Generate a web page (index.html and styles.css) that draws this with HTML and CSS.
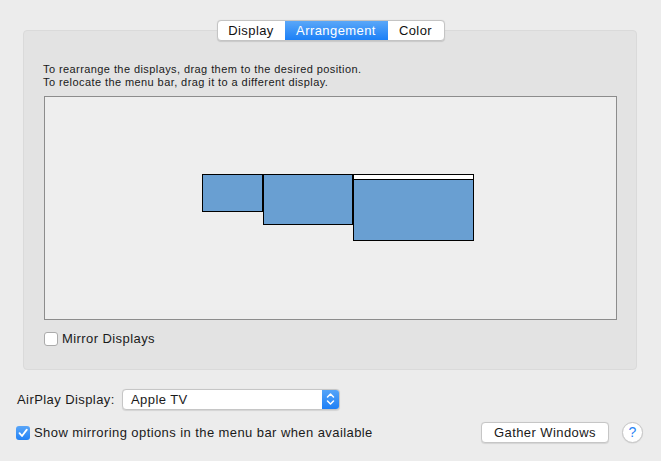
FILE: index.html
```html
<!DOCTYPE html>
<html>
<head>
<meta charset="utf-8">
<link rel="stylesheet" href="styles.css">
</head>
<body>
<div class="tabs-row">
  <div class="tabs">
    <div class="tab tab-display">Display</div>
    <div class="tab tab-active">Arrangement</div>
    <div class="tab tab-color">Color</div>
  </div>
</div>
<div class="group">
  <div class="hint">
    <div>To rearrange the displays, drag them to the desired position.</div>
    <div>To relocate the menu bar, drag it to a different display.</div>
  </div>
  <div class="canvas">
    <div class="screen screen-1"></div>
    <div class="screen screen-2"></div>
    <div class="screen screen-3"><div class="menubar"></div></div>
  </div>
  <label class="check-row mirror">
    <span class="checkbox"></span>
    <span class="check-label">Mirror Displays</span>
  </label>
</div>
<div class="airplay-row">
  <span class="airplay-label">AirPlay Display:</span>
  <div class="popup">
    <span class="popup-text">Apple TV</span>
    <span class="stepper">
      <svg width="17" height="20" viewBox="0 0 17 20">
        <path d="M5.5 8 L8.5 5 L11.5 8" fill="none" stroke="#fff" stroke-width="1.5" stroke-linecap="round" stroke-linejoin="round"/>
        <path d="M5.5 12 L8.5 15 L11.5 12" fill="none" stroke="#fff" stroke-width="1.5" stroke-linecap="round" stroke-linejoin="round"/>
      </svg>
    </span>
  </div>
</div>
<div class="bottom-row">
  <label class="check-row show-opt">
    <span class="checkbox checked">
      <svg width="14" height="14" viewBox="0 0 14 14">
        <path d="M3.5 7.2 L6 10 L10.8 3.6" fill="none" stroke="#fff" stroke-width="1.8" stroke-linecap="round" stroke-linejoin="round"/>
      </svg>
    </span>
    <span class="check-label">Show mirroring options in the menu bar when available</span>
  </label>
  <div class="bottom-right">
    <div class="button">Gather Windows</div>
    <div class="help">?</div>
  </div>
</div>
</body>
</html>
```
FILE: styles.css
```css
html, body {
  margin: 0;
  padding: 0;
}
body {
  width: 661px;
  height: 461px;
  background: #ececec;
  font-family: "Liberation Sans", Arial, sans-serif;
  letter-spacing: 0.42px;
  color: #1a1a1a;
  overflow: hidden;
}
.tabs-row {
  display: flex;
  justify-content: center;
  padding-top: 20px;
  position: relative;
  z-index: 2;
}
.tabs {
  display: flex;
  height: 21px;
  box-sizing: border-box;
  border: 1px solid #c4c4c4;
  border-radius: 4px;
  background: #fff;
  overflow: hidden;
  box-shadow: 0 0.5px 1px rgba(0,0,0,0.12);
}
.tab {
  font-size: 13px;
  line-height: 19px;
  text-align: center;
  color: #111;
}
.tab-display { width: 67px; }
.tab-active {
  width: 103px;
  color: #fff;
  background: linear-gradient(#5aa7f8, #1c80f7);
}
.tab-color { width: 56px; }
.group {
  margin: -11px 0 0 23px;
  width: 614px;
  height: 340px;
  box-sizing: border-box;
  background: #e3e3e3;
  border: 1px solid #dadada;
  border-radius: 4px;
  padding: 0 19px 0 19px;
  display: flex;
  flex-direction: column;
}
.hint {
  margin-top: 32px;
  font-size: 11px;
  line-height: 13px;
  color: #1a1a1a;
}
.canvas {
  margin: 7px 0 0 1px;
  width: 573px;
  height: 224px;
  box-sizing: border-box;
  border: 1px solid #8c8c8c;
  background: #eeeeee;
  position: relative;
}
.screen {
  position: absolute;
  box-sizing: border-box;
  border: 1px solid #000;
  background: #699fd2;
}
.screen-1 { left: 157px; top: 77px; width: 61px; height: 38px; }
.screen-2 { left: 218px; top: 77px; width: 90px; height: 51px; }
.screen-3 { left: 308px; top: 77px; width: 121px; height: 67px; }
.menubar {
  height: 4px;
  background: #fff;
  border-bottom: 1px solid #000;
}
.check-row {
  display: flex;
  align-items: center;
  font-size: 13px;
}
.checkbox {
  width: 14px;
  height: 14px;
  box-sizing: border-box;
  border: 1px solid #ababab;
  border-radius: 3px;
  background: #fff;
  flex: none;
  display: flex;
}
.checkbox.checked {
  border: none;
  background: linear-gradient(#5aa6f8, #2282f6);
}
.mirror {
  margin: 11px 0 0 1px;
}
.mirror .check-label { margin-left: 4px; }
.airplay-row {
  display: flex;
  align-items: center;
  margin: 19px 0 0 17px;
  height: 20px;
}
.airplay-label {
  font-size: 13px;
  width: 105px;
}
.popup {
  width: 218px;
  height: 21px;
  box-sizing: border-box;
  border: 1px solid #c6c6c6;
  border-radius: 4px;
  background: #fff;
  display: flex;
  align-items: center;
  justify-content: space-between;
  overflow: hidden;
  box-shadow: 0 0.5px 1px rgba(0,0,0,0.1);
}
.popup-text {
  font-size: 13px;
  padding-left: 8px;
}
.stepper {
  width: 17px;
  height: 21px;
  background: linear-gradient(#58a6f8, #1b7ef6);
  display: flex;
  align-items: center;
  justify-content: center;
}
.bottom-row {
  display: flex;
  align-items: center;
  justify-content: space-between;
  margin: 13px 18px 0 16px;
}
.show-opt .check-label { margin-left: 4px; }
.bottom-right {
  display: flex;
  align-items: center;
  gap: 13px;
}
.button {
  width: 128px;
  height: 21px;
  box-sizing: border-box;
  border: 1px solid #c6c6c6;
  border-radius: 4px;
  background: #fff;
  font-size: 13px;
  line-height: 19px;
  text-align: center;
  box-shadow: 0 0.5px 1px rgba(0,0,0,0.1);
}
.help {
  width: 21px;
  height: 21px;
  box-sizing: border-box;
  border: 1px solid #c6c6c6;
  border-radius: 50%;
  background: #fff;
  color: #2a84f5;
  font-size: 14px;
  line-height: 19px;
  letter-spacing: 0;
  text-align: center;
  box-shadow: 0 0.5px 1px rgba(0,0,0,0.1);
}
```
